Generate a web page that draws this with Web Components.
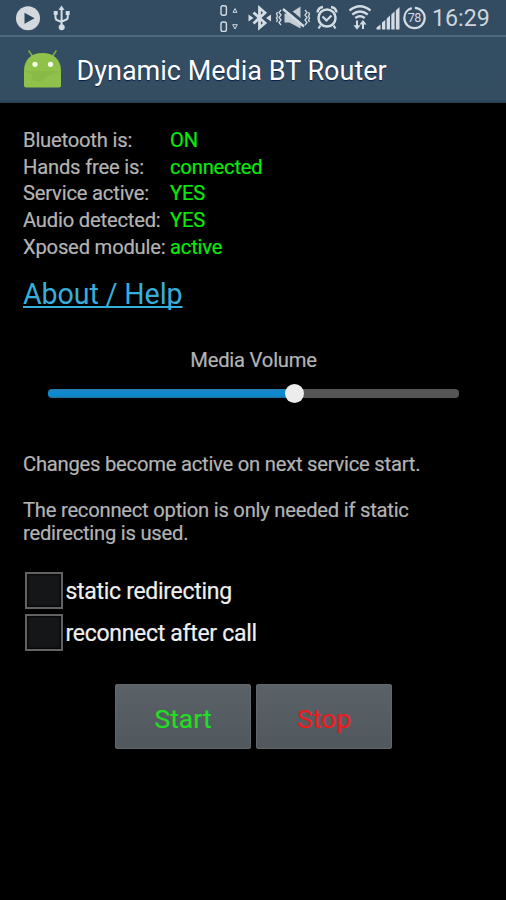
<!DOCTYPE html>
<html lang="en">
<head>
<meta charset="utf-8">
<title>Dynamic Media BT Router</title>
<style>
html,body{margin:0;background:#000}
body{width:506px;height:900px;overflow:hidden;font-family:Roboto,"Noto Sans",sans-serif;color:#b4b4b4}
</style>
</head>
<body>
<router-app></router-app>
<script>
function define(name, html){
  const t = document.createElement('template');
  t.innerHTML = html;
  customElements.define(name, class extends HTMLElement{
    constructor(){
      super();
      this.attachShadow({mode:'open'}).appendChild(t.content.cloneNode(true));
    }
  });
}

define('status-bar', `
<style>
:host{display:flex;box-sizing:border-box;height:37px;background:#334c62;border-bottom:2px solid #4d687e;color:#d3dce3;align-items:flex-start}
svg{display:block;flex:none;fill:none;stroke:#d3dce3}
time{margin-left:4px;font-size:23.200px;line-height:35px;padding:1px 0 0 0;color:#ccd5dc}
</style>
<svg width="80" height="35" viewBox="0 0 80 35">
  <circle cx="28" cy="18.300" r="12" fill="#d3d9dd" stroke="none"/>
  <path d="M24.500 12.800v11l10-5.500z" fill="#2d475c" stroke="none"/>
  <g stroke-width="2"><path d="M61.600 8v20M55.500 12v5.500q0 2.500 2.500 3l3.500 1.500M67.800 12v5q0 2.500-2.500 3l-3.500 1.500"/></g>
  <g fill="#d3dce3" stroke="none"><path d="M61.500 5.500l3 4.500h-6z"/><rect x="53.700" y="11" width="4" height="4"/><rect x="65.700" y="11" width="4" height="4"/><circle cx="61.700" cy="27.300" r="3"/></g>
</svg>
<svg style="margin-left:135px" width="213" height="35" viewBox="215 0 213 35">
  <rect x="221" y="5.800" width="5.400" height="9.400" rx="2" stroke-width="1.400"/>
  <rect x="221" y="22" width="5.400" height="9.400" rx="2" stroke-width="1.400"/>
  <path d="M235 8.600l2 3.700h-4zM235 29l2.300-4.300h-4.600z" stroke-width="1"/>
  <path d="M253.500 12.500l11.500 10.500-5.500 4.700V8l5.500 4.700L253.500 23.500" stroke-width="2.800"/>
  <path d="M248.500 14.500l5 3.500-5 3.500zM271 14.500l-5 3.500 5 3.500z" fill="#d3dce3" stroke="none"/>
  <path d="M284.500 13.500h5l11-7v22l-11-6h-5z" fill="#c4ced6" stroke="none"/>
  <path d="M285.500 7.500l19 16" stroke="#334c62" stroke-width="3"/>
  <path d="M283 9l21 17.500" stroke-width="2.400"/>
  <path d="M281 10l-2 2.500 2 2.500-2 2.500 2 2.500-2 2.500 2 2.500M277.500 12l-1 2 1 2-1 2 1 2-1 2M305 10l2 2.500-2 2.500 2 2.500-2 2.500 2 2.500-2 2.500M308.500 12l1 2-1 2 1 2-1 2 1 2" stroke-width="1.300"/>
  <circle cx="327" cy="18" r="8.500" stroke-width="2.500"/>
  <path d="M322.500 16.500l4 4 5-5M320.500 25.500l-2 3M333.500 25.500l2 3" stroke-width="2.200"/>
  <path d="M317.500 12.500q.5-5 5.500-5.500M331 7q5 .5 5.500 5.500" stroke-width="2.400"/>
  <g stroke-width="2.300"><path d="M349.500 10.500q10.500-8.500 21 0M352.300 14.500q7.700-6 15.400 0M355.300 18q4.700-3.500 9.400 0"/></g>
  <path d="M357 20.500v6M363 29v-6" stroke-width="2"/>
  <path d="M353.500 25.200h7l-3.500 4.500zM359.500 24.500h7l-3.500-4.500z" fill="#d3dce3" stroke="none"/>
  <g fill="#d3dce3" stroke="none"><path d="M376.500 29.500v-2l4-3v5zM382 29.500v-7l3.300-2.500v9.500zM386.700 29.500v-11l3.300-3v14zM391.300 29.500v-15l3.300-3v18zM395.900 29.500V10.300L399.500 7v22.500z"/></g>
  <circle cx="414.500" cy="18" r="10.200" stroke-width="2.200" stroke-dasharray="61 3.100" stroke-dashoffset="16"/>
  <text x="414.300" y="22.300" font-family="Roboto,sans-serif" font-size="12.500" text-anchor="middle" letter-spacing="-.5" fill="#d3dce3" stroke="none">78</text>
</svg>
<time>16:29</time>`);

define('action-bar', `
<style>
:host{display:flex;box-sizing:border-box;height:66px;background:linear-gradient(#334d63,#344d61 95%,#293d4d);padding:0 0 0 22px;align-items:center;color:#fff}
svg{display:block;flex:none}
h1{margin:1px 0 0 12.500px;font-weight:400;font-size:27px;line-height:36px;white-space:nowrap;text-shadow:0 1px 1px #0b1d4a}
</style>
<svg width="42" height="42" viewBox="22 49 42 42">
 <path d="M29 51l4 6M56 51l-4 6" stroke="#7fae43" stroke-width="1.600" stroke-linecap="round"/>
 <path d="M24 70.500C24 59 32 53 42.500 53S61 59 61 70.500v15q0 2-2 2H26q-2 0-2-2z" fill="#90c14b"/>
 <path d="M24 71h37v1q-15 2-19 10-12 0-10-8-5-2-8-2z" fill="#89ba48"/>
 <circle cx="35" cy="64.300" r="2.600" fill="#f7ffe9"/><circle cx="50.500" cy="64.300" r="2.600" fill="#f7ffe9"/>
</svg>
<h1><slot></slot></h1>`);

define('status-row', `
<style>
:host{display:grid;grid-template-columns:147px 1fr;height:26.700px;line-height:26.700px;font-size:20.200px;letter-spacing:-.2px;white-space:nowrap;-webkit-text-stroke:.2px}
.v{color:#0ce80c}
</style><span><slot></slot></span><span class="v"><slot name="value"></slot></span>`);

define('help-link', `
<style>
:host{display:block;height:36px;line-height:36px;font-size:28.600px;letter-spacing:-.1px;color:#36aedb}
a{text-decoration:underline;text-decoration-thickness:2px;text-underline-offset:2px;text-decoration-skip-ink:none}
</style><a><slot></slot></a>`);

define('volume-slider', `
<style>
:host{display:block;padding:0 24px 0 25px}
.l{text-align:center;font-size:20.200px;letter-spacing:-.2px;line-height:24px;-webkit-text-stroke:.2px}
.t{display:flex;align-items:center;height:20px;margin-top:11px}
.a{width:238px;height:9px;border-radius:4px 0 0 4px;background:linear-gradient(#2a7cae,#118ace 30%,#0c87cd 75%,#236c96)}
.k{width:19px;height:19px;border-radius:50%;background:#ececec;flex:none;margin:0 -1px;z-index:1}
.b{flex:1;height:9px;border-radius:0 4px 4px 0;background:#555}
</style><div class="l"><slot></slot></div><div class="t"><i class="a"></i><i class="k"></i><i class="b"></i></div>`);

define('info-text', `
<style>:host{display:block;font-size:20.200px;letter-spacing:-.23px;line-height:23px;-webkit-text-stroke:.2px}</style><slot></slot>`);

define('check-option', `
<style>
:host{display:flex;align-items:center;height:42px;font-size:23px;letter-spacing:-.3px;color:#efefef;white-space:nowrap;-webkit-text-stroke:.2px}
i{box-sizing:border-box;width:38px;height:37px;margin:0 2.500px 0 2px;border:2px solid #626262;background:#141618;box-shadow:inset 0 0 2px 1px #050505}
span{padding-top:2px}
</style><i></i><span><slot></slot></span>`);

define('push-button', `
<style>
:host{display:flex;align-items:center;justify-content:center;box-sizing:border-box;width:136px;height:65px;padding-top:3px;border-radius:3px;background:linear-gradient(#5a6268,#50575d);box-shadow:inset 0 0 1px 1px #62696e;font-size:26.500px;-webkit-text-stroke:.2px}
</style><slot></slot>`);

define('router-app', `
<style>
:host{display:block;width:506px;height:900px;background:#000}
main{padding:24px 23px 0}
help-link{margin-top:16px}
volume-slider{margin-top:36px}
.one{margin-top:50px}.two{margin-top:23px;width:420px}
.checks{margin-top:24px}
.btns{display:flex;gap:5px;margin:31px 0 0 92px}
</style>
<status-bar></status-bar>
<action-bar>Dynamic Media BT Router</action-bar>
<main>
<status-row>Bluetooth is:<span slot="value">ON</span></status-row>
<status-row>Hands free is:<span slot="value">connected</span></status-row>
<status-row>Service active:<span slot="value">YES</span></status-row>
<status-row>Audio detected:<span slot="value">YES</span></status-row>
<status-row>Xposed module:<span slot="value">active</span></status-row>
<help-link>About / Help</help-link>
<volume-slider>Media Volume</volume-slider>
<info-text class="one">Changes become active on next service start.</info-text>
<info-text class="two">The reconnect option is only needed if static<br>redirecting is used.</info-text>
<div class="checks"><check-option>static redirecting</check-option><check-option>reconnect after call</check-option></div>
<div class="btns"><push-button style="color:#22df22">Start</push-button><push-button style="color:#e81d1d">Stop</push-button></div>
</main>`);
</script>
</body>
</html>
